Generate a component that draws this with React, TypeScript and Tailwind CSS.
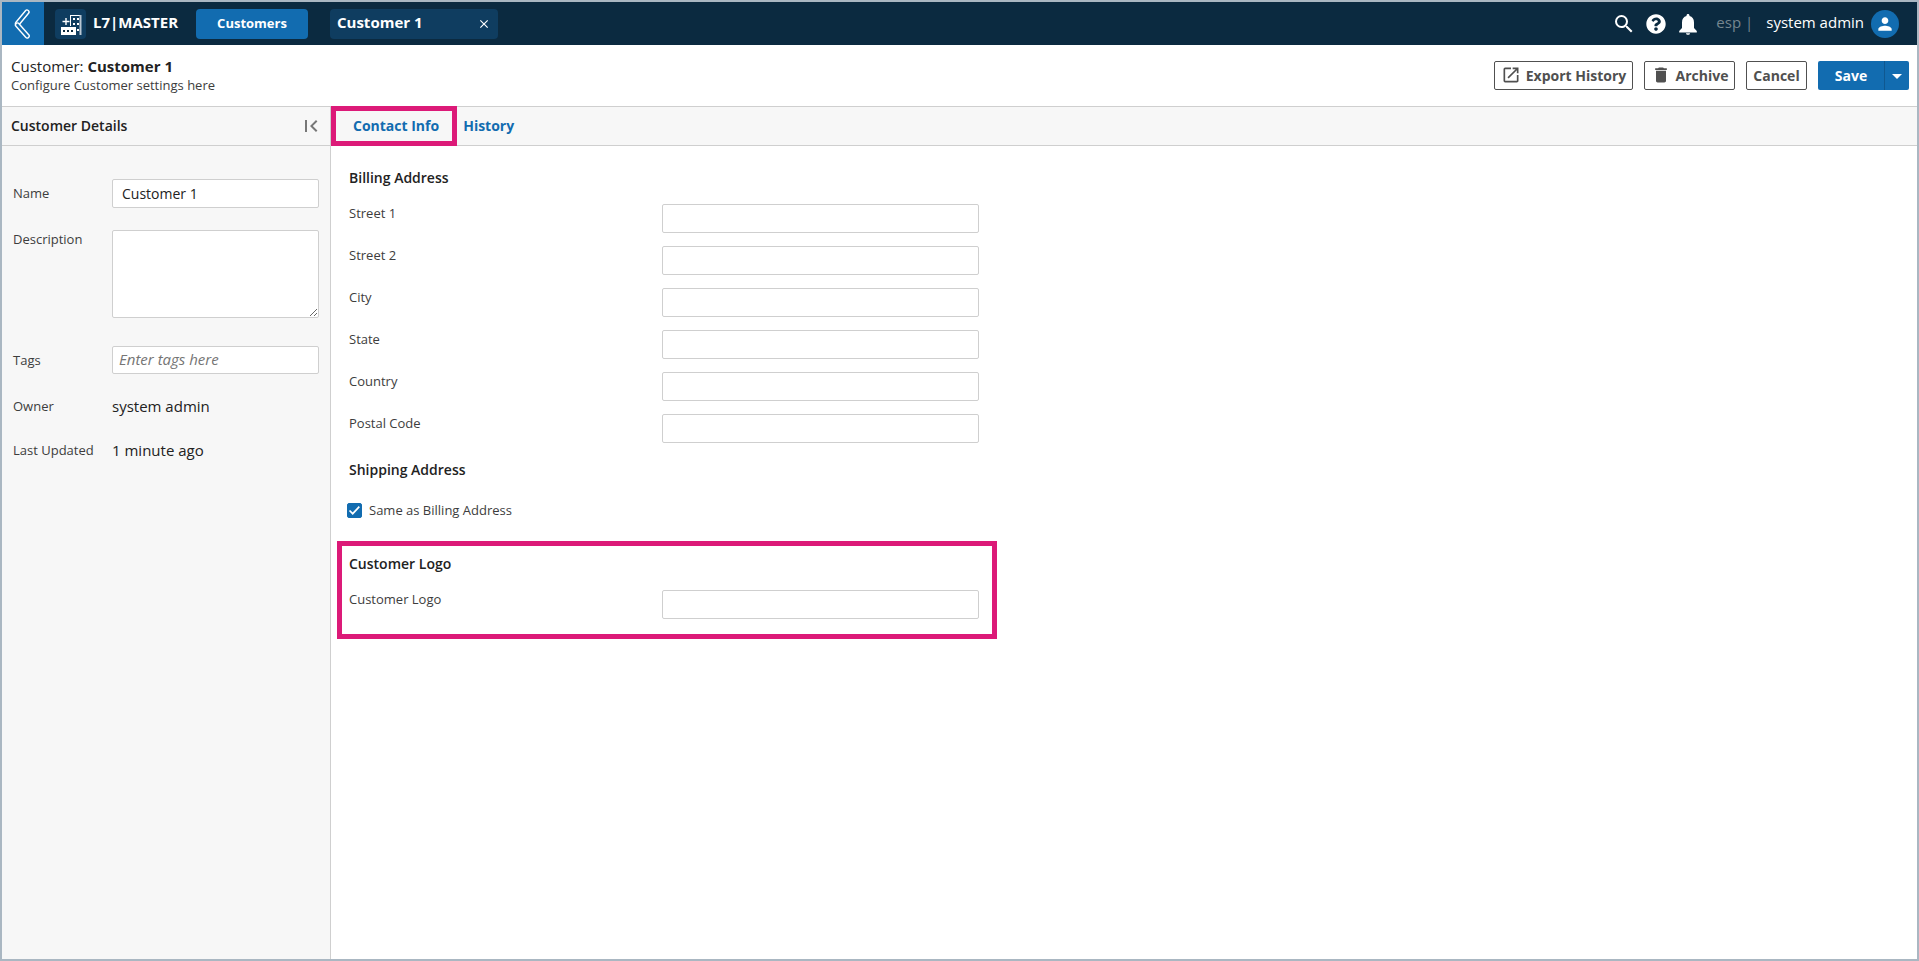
import React, { useState } from 'react';
import { FaQuestionCircle } from 'react-icons/fa';
import { MdArrowDropDown, MdClose, MdDelete, MdFirstPage, MdOpenInNew, MdPerson, MdSearch } from 'react-icons/md';

const ADDRESS_FIELDS = [
  { id: 'street1', label: 'Street 1' },
  { id: 'street2', label: 'Street 2' },
  { id: 'city', label: 'City' },
  { id: 'state', label: 'State' },
  { id: 'country', label: 'Country' },
  { id: 'postalCode', label: 'Postal Code' },
];

// two outlined bars that overlap at the tip
const BackIcon: React.FC = () => (
  <svg width="18" height="32" viewBox="0 0 18 32" fill="none" strokeLinecap="round">
    <path d="M13 4L3.500 15.500" stroke="white" strokeWidth="5.4" />
    <path d="M13 4L3.500 15.500" stroke="#126cb0" strokeWidth="2.6" />
    <path d="M3.500 17L13.200 28" stroke="white" strokeWidth="5.4" />
    <path d="M3.500 17L13.200 28" stroke="#126cb0" strokeWidth="2.6" />
  </svg>
);

const BuildingIcon: React.FC = () => (
  <svg width="21" height="21" viewBox="0 0 21 21">
    <path d="M9.5 12V1.5M9 1.5h11" fill="none" stroke="white" strokeWidth="1" />
    <path d="M19.5 1v20" stroke="#b9c7d3" strokeWidth="2" />
    <path d="M1.5 7.5h7M5 4v7" stroke="white" strokeWidth="1.4" />
    <path d="M0 13h15v8H0z" fill="white" />
    <path d="M12 4h2v2h-2zM16 4h2v2h-2zM12 9h2v2h-2zM16 9h2v2h-2zM16 15h2v2h-2z" fill="white" />
    <path d="M2 16h2v2H2zM6 16h2v2H6zM10 16h2v2h-2z" fill="#0b2a40" />
  </svg>
);

const BellIcon: React.FC = () => (
  <svg width="24" height="24" viewBox="0 0 24 24" fill="white">
    <path d="M12 2c-.9 0-1.5.6-1.5 1.5v.6C7.6 4.8 6 7.2 6 10.5V16l-2.8 3v1.5h17.6V19L18 16v-5.5c0-3.3-1.6-5.7-4.5-6.4v-.6C13.500 2.600 12.900 2 12 2zM10 21.300h4c0 1-.9 1.500-2 1.500s-2-.5-2-1.500z" />
  </svg>
);

interface FieldRowProps {
  id: string;
  label: string;
}

const FieldRow: React.FC<FieldRowProps> = ({ id, label }) => {
  const [value, setValue] = useState('');

  return (
    <div className="grid grid-cols-[313px_317px]">
      <label htmlFor={id} className="text-[13px] leading-[18px] text-[#3d3d3d]">
        {label}
      </label>
      <input
        type="text"
        id={id}
        value={value}
        onChange={(e) => setValue(e.target.value)}
        className="h-[29px] min-w-0 px-2 text-sm bg-white border border-[#cfcfcf] rounded-xs"
      />
    </div>
  );
};

const TopBar: React.FC = () => (
  <header className="h-[43px] flex items-center bg-[#0b2a40] text-white">
    <button aria-label="Back" className="w-[42px] h-full flex items-center justify-center bg-[#126cb0]">
      <BackIcon />
    </button>
    <div className="ml-[11px] w-[31px] h-[30px] pl-px pt-px flex items-center justify-center rounded bg-[#0f3d60]">
      <BuildingIcon />
    </div>
    <span className="ml-[7px] w-[103px] pb-0.5 text-[15px] font-bold">L7|MASTER</span>
    <button className="w-28 h-[30px] rounded bg-[#126cb0] text-[13px] font-bold">Customers</button>
    <div className="ml-[22px] w-[168px] h-[30px] px-[7px] flex items-center justify-between rounded bg-[#0f3d60]">
      <span className="pb-0.5 text-[15px] font-bold">Customer 1</span>
      <button aria-label="Close tab">
        <MdClose className="w-[14px] h-[14px]" />
      </button>
    </div>

    <div className="ml-auto flex items-center pr-[18px]">
      <button aria-label="Search">
        <MdSearch className="w-6 h-6" />
      </button>
      <button aria-label="Help" className="ml-[10px]">
        <FaQuestionCircle className="w-5 h-5" />
      </button>
      <button aria-label="Notifications" className="ml-[10px]">
        <BellIcon />
      </button>
      <span className="ml-4 pb-0.5 text-[15px] text-[#75868f]">esp |</span>
      <span className="ml-[13px] pb-0.5 text-[15px]">system admin</span>
      <button
        aria-label="Account"
        className="ml-[7px] w-7 h-7 flex items-center justify-center rounded-full bg-[#126cb0]"
      >
        <MdPerson className="w-5 h-5" />
      </button>
    </div>
  </header>
);

const TitleBar: React.FC = () => (
  <div className="h-[62px] pl-[9px] pr-2 flex items-center justify-between border-b border-[#cfcfcf]">
    <div className="pb-0.5">
      <h1 className="text-[15px] leading-5 text-[#222222]">
        Customer: <span className="font-bold">Customer 1</span>
      </h1>
      <p className="text-[13px] leading-[18px] text-[#3d3d3d]">Configure Customer settings here</p>
    </div>
    <div className="flex items-center text-sm font-bold text-[#505050]">
      <button className="h-[29px] w-[139px] flex items-center justify-center gap-[5px] border border-[#505050] rounded-xs">
        <MdOpenInNew className="w-5 h-5 mb-0.5" />
        Export History
      </button>
      <button className="ml-[11px] h-[29px] w-[91px] flex items-center justify-center gap-[5px] border border-[#505050] rounded-xs">
        <MdDelete className="w-5 h-5 mb-0.5" />
        Archive
      </button>
      <button className="ml-[11px] h-[29px] w-[61px] border border-[#505050] rounded-xs">Cancel</button>
      <button className="ml-[11px] h-[29px] w-[66px] rounded-l-xs bg-[#126cb0] text-white">Save</button>
      <button
        aria-label="More save options"
        className="h-[29px] w-[25px] flex items-center justify-center rounded-r-xs bg-[#126cb0] border-l border-[#0f5890] text-white"
      >
        <MdArrowDropDown className="w-6 h-6" />
      </button>
    </div>
  </div>
);

const DetailsPanel: React.FC = () => {
  const [name, setName] = useState('Customer 1');
  const [description, setDescription] = useState('');
  const [tags, setTags] = useState('');

  return (
    <aside className="w-[329px] shrink-0 bg-[#f7f7f7] border-r border-[#cfcfcf]">
      <div className="h-[39px] pl-[9px] pr-[7px] flex items-center justify-between border-b border-[#cfcfcf]">
        <h2 className="text-sm font-semibold text-[#222222]">Customer Details</h2>
        <button aria-label="Collapse panel" className="text-[#777777]">
          <MdFirstPage className="w-6 h-6" />
        </button>
      </div>
      <div className="pt-[33px] pl-[11px] pr-[11px] text-[13px] leading-[18px] text-[#3d3d3d]">
        <div className="grid grid-cols-[99px_1fr]">
          <label htmlFor="name" className="pt-[5px]">
            Name
          </label>
          <input
            type="text"
            id="name"
            value={name}
            onChange={(e) => setName(e.target.value)}
            className="h-[29px] min-w-0 px-[9px] text-sm text-[#222222] bg-white border border-[#cfcfcf] rounded-xs"
          />
        </div>
        <div className="mt-[22px] grid grid-cols-[99px_1fr]">
          <label htmlFor="description">Description</label>
          <textarea
            id="description"
            value={description}
            onChange={(e) => setDescription(e.target.value)}
            className="h-[88px] min-w-0 px-2 py-1 text-sm text-[#222222] bg-white border border-[#cfcfcf] rounded-xs"
          />
        </div>
        <div className="mt-7 grid grid-cols-[99px_1fr]">
          <label htmlFor="tags" className="pt-[5px]">
            Tags
          </label>
          <input
            type="text"
            id="tags"
            value={tags}
            onChange={(e) => setTags(e.target.value)}
            placeholder="Enter tags here"
            className="h-7 min-w-0 px-[6px] pb-0.5 text-[15px] text-[#222222] bg-white border border-[#cfcfcf] rounded-xs placeholder:italic placeholder:text-[#757575]"
          />
        </div>
        <dl className="mt-5 grid grid-cols-[99px_1fr] items-center gap-y-5 leading-6">
          <dt>Owner</dt>
          <dd className="text-[15px] text-[#222222]">system admin</dd>
          <dt>Last Updated</dt>
          <dd className="text-[15px] text-[#222222]">1 minute ago</dd>
        </dl>
      </div>
    </aside>
  );
};

const ContactInfo: React.FC = () => {
  const [sameAsBilling, setSameAsBilling] = useState(true);

  return (
    <div className="pt-5 pl-[18px]">
      <h3 className="text-sm leading-6 font-semibold text-[#222222]">Billing Address</h3>
      <div className="mt-[14px] flex flex-col gap-[13px]">
        {ADDRESS_FIELDS.map((field) => (
          <FieldRow key={field.id} id={field.id} label={field.label} />
        ))}
      </div>

      <h3 className="mt-[15px] text-sm leading-6 font-semibold text-[#222222]">Shipping Address</h3>
      <label className="mt-[19px] -ml-[2px] flex items-center gap-[7px] text-[13px] leading-[18px] text-[#3d3d3d]">
        <span className="relative w-[15px] h-[15px]">
          <input
            type="checkbox"
            checked={sameAsBilling}
            onChange={(e) => setSameAsBilling(e.target.checked)}
            className="block w-[15px] h-[15px] appearance-none rounded-xs border border-[#126cb0] checked:bg-[#126cb0]"
          />
          {sameAsBilling && (
            <svg viewBox="0 0 15 15" className="absolute inset-0 pointer-events-none" fill="none">
              <path d="M2.5 7.5l3.2 3.2 6.6-7" stroke="white" strokeWidth="1.7" />
            </svg>
          )}
        </span>
        Same as Billing Address
      </label>

      <section className="mt-[22px] -ml-3 w-[660px] pt-[6px] pl-[7px] pb-[15px] border-5 border-[#dc1a78]">
        <h3 className="text-sm leading-6 font-semibold text-[#222222]">Customer Logo</h3>
        <div className="mt-[14px]">
          <FieldRow id="customerLogo" label="Customer Logo" />
        </div>
      </section>
    </div>
  );
};

export default function App() {
  return (
    <div className="min-h-screen flex flex-col bg-white border-2 border-[#aab7c2] font-['Open_Sans',sans-serif]">
      <TopBar />
      <TitleBar />
      <div className="flex-1 flex">
        <DetailsPanel />
        <main className="flex-1">
          <nav className="h-[39px] flex items-center bg-[#f7f7f7] border-b border-[#cfcfcf] text-sm font-bold text-[#126cb0]">
            <button className="relative h-full pl-[22px] pr-[18px]">
              Contact Info
              <span className="absolute left-0 right-0 -top-px -bottom-px border-5 border-[#dc1a78]" />
            </button>
            <button className="h-full pl-[6px]">History</button>
          </nav>
          <ContactInfo />
        </main>
      </div>
    </div>
  );
}
